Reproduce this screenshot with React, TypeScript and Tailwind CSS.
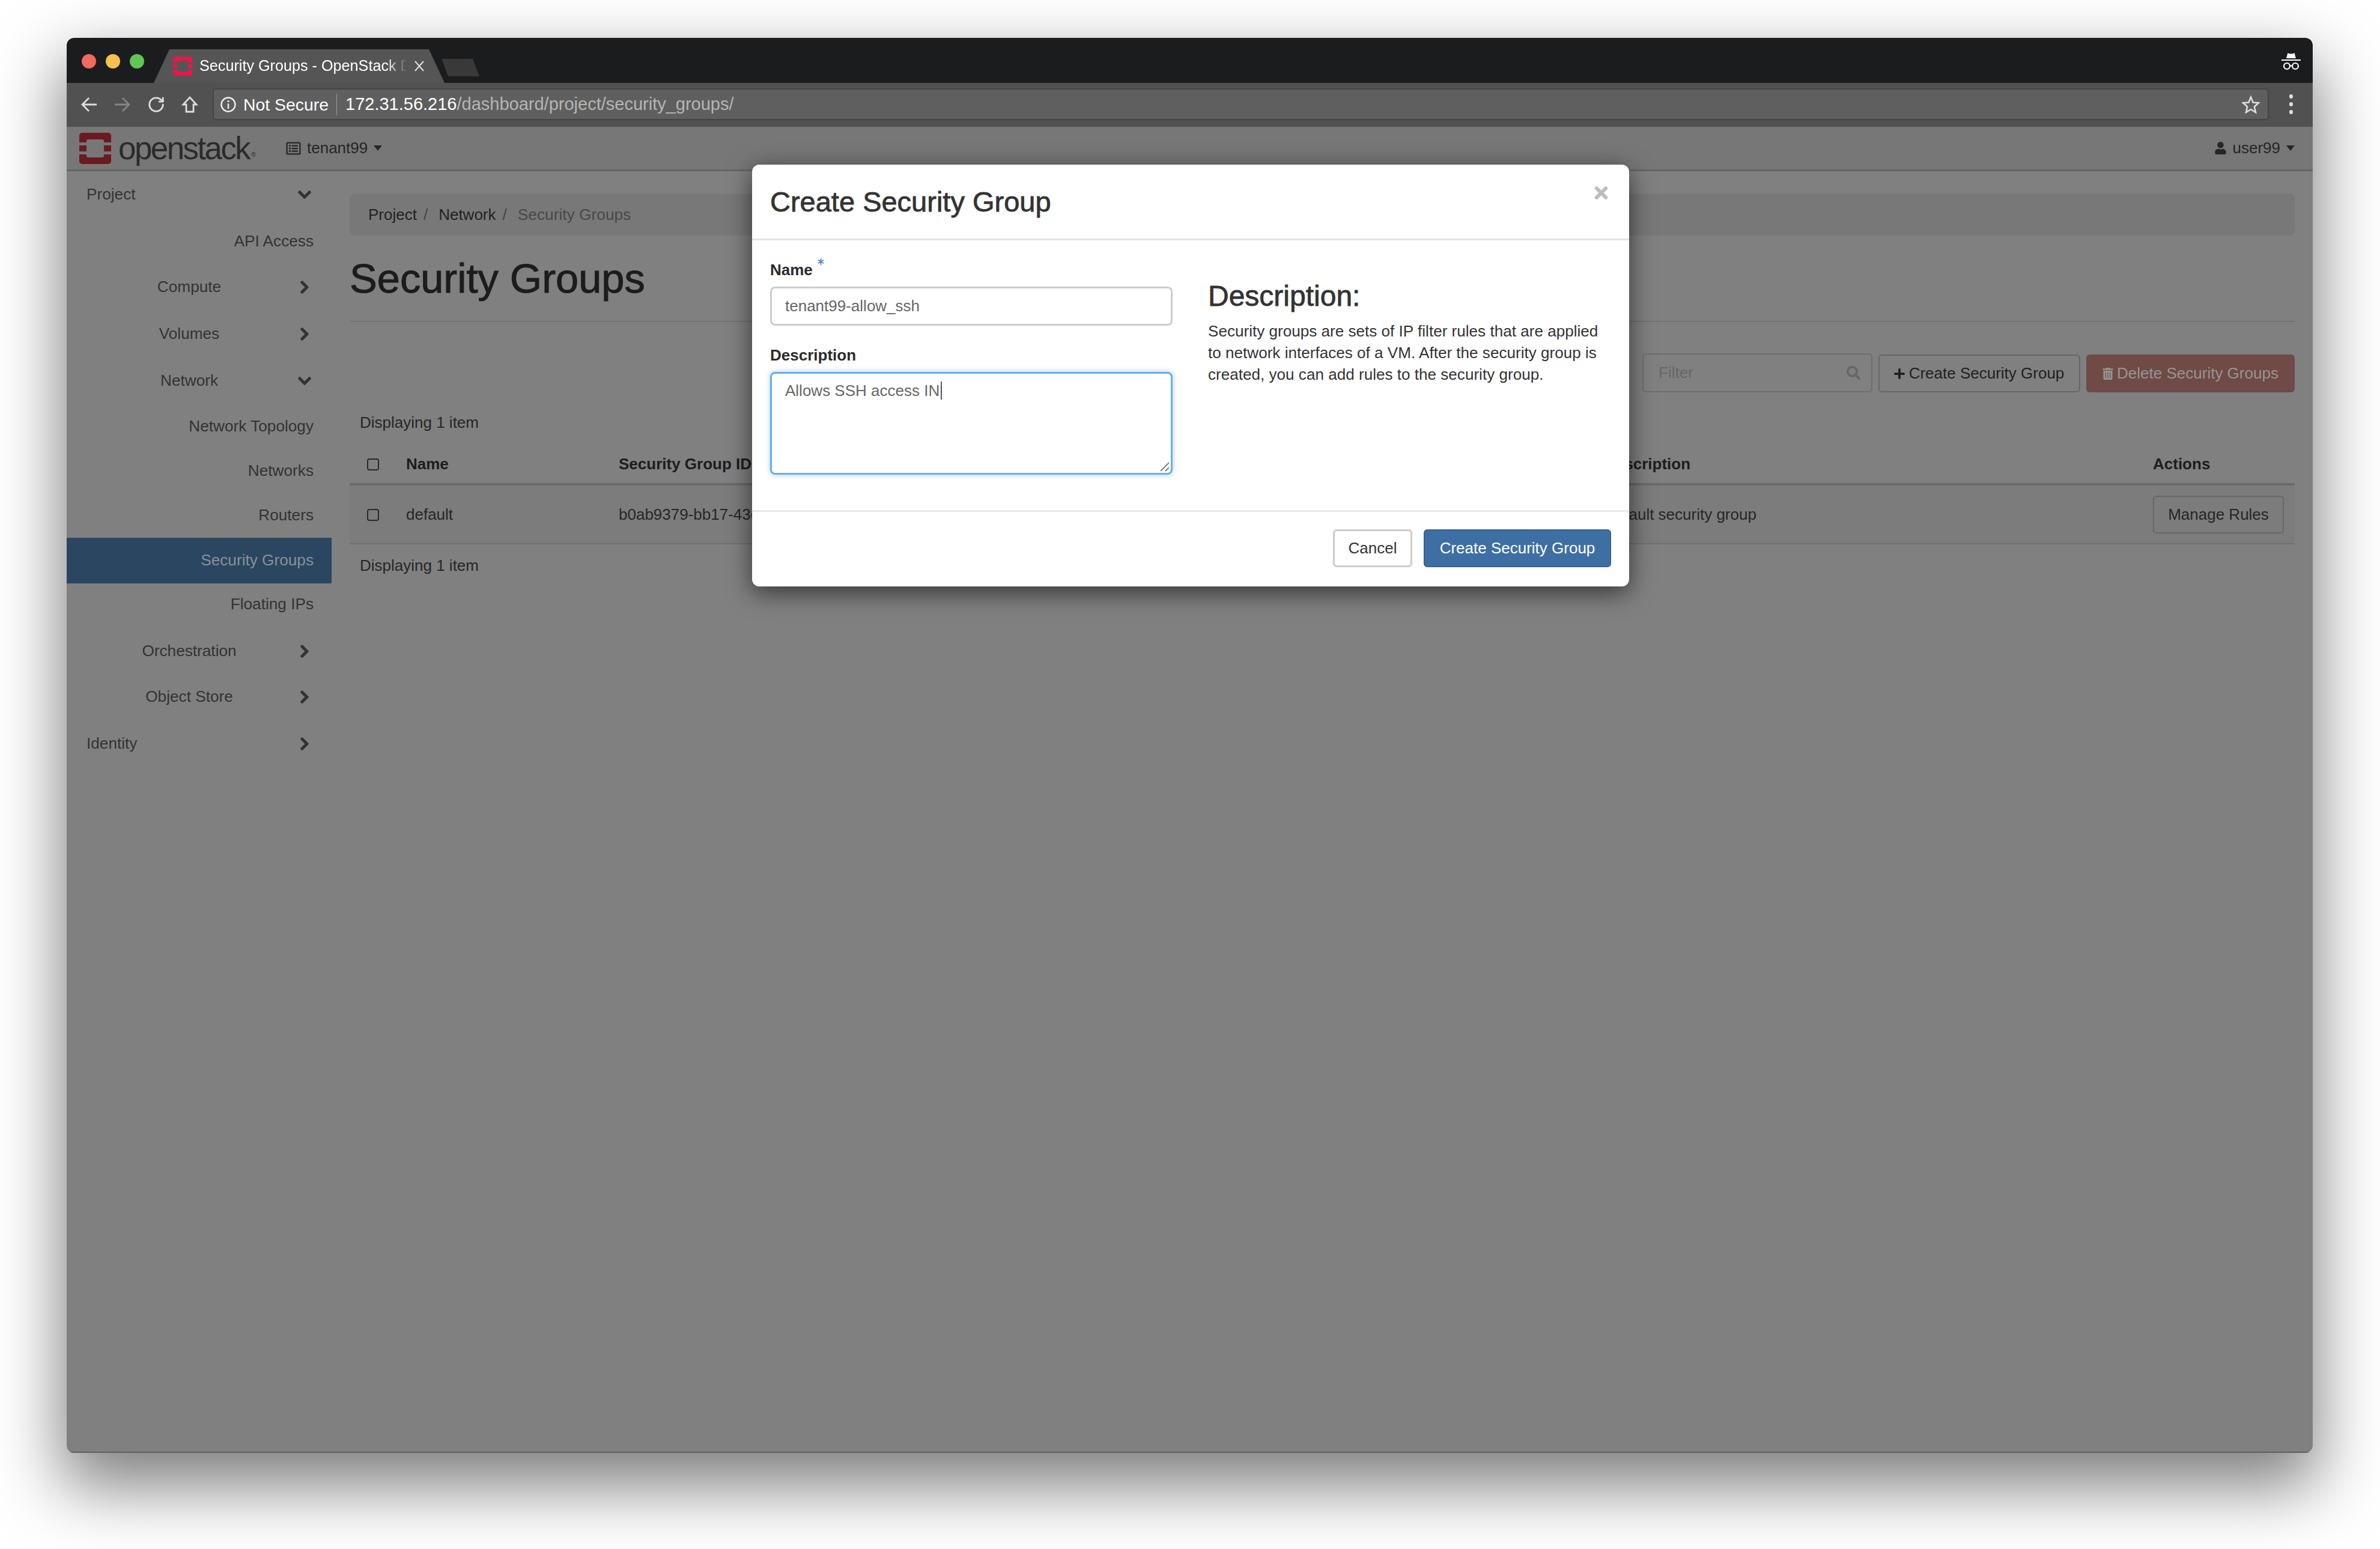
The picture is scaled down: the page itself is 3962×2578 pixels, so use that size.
import React from "react";
import { FaChevronDown, FaChevronRight, FaPlus, FaRegListAlt, FaSearch, FaTimes, FaTrashAlt, FaUser, FaAsterisk } from "react-icons/fa";
import { RotateCw } from "lucide-react";

type NavItem = { label: string; kind: "top" | "group" | "leaf"; open?: boolean; active?: boolean; mt: string };

const navItems: NavItem[] = [
  { label: "Project", kind: "top", open: true, mt: "mt-0" },
  { label: "API Access", kind: "leaf", mt: "mt-[4px]" },
  { label: "Compute", kind: "group", mt: "mt-[2px]" },
  { label: "Volumes", kind: "group", mt: "mt-[4px]" },
  { label: "Network", kind: "group", open: true, mt: "mt-[4px]" },
  { label: "Network Topology", kind: "leaf", mt: "mt-[2px]" },
  { label: "Networks", kind: "leaf", mt: "mt-0" },
  { label: "Routers", kind: "leaf", mt: "mt-0" },
  { label: "Security Groups", kind: "leaf", active: true, mt: "mt-0" },
  { label: "Floating IPs", kind: "leaf", mt: "mt-[-2px]" },
  { label: "Orchestration", kind: "group", mt: "mt-[4px]" },
  { label: "Object Store", kind: "group", mt: "mt-[2px]" },
  { label: "Identity", kind: "top", mt: "mt-[4px]" },
];

function StackLogo({ className }: { className: string }) {
  return (
    <svg viewBox="0 0 53 52" fill="currentColor" className={className}>
      <path d="M5 0H48a5 5 0 0 1 5 5V16H41V14a3 3 0 0 0-3-3H15a3 3 0 0 0-3 3V16H0V5a5 5 0 0 1 5-5z" />
      <path d="M0 36H12V38a3 3 0 0 0 3 3H38a3 3 0 0 0 3-3V36H53V47a5 5 0 0 1-5 5H5a5 5 0 0 1-5-5z" />
      <rect x="0" y="21" width="12" height="10" />
      <rect x="41" y="21" width="12" height="10" />
    </svg>
  );
}

function SideRow({ item }: { item: NavItem }) {
  if (item.kind === "leaf") {
    return (
      <div
        className={`${item.mt} flex items-center justify-end pr-[30px] text-[26.2px] ${
          item.active ? "h-[76px] bg-[#2a4661] text-[#8b9096]" : "h-[74px] text-[#333333]"
        }`}
      >
        {item.label}
      </div>
    );
  }
  return (
    <div className={`${item.mt} flex h-[74px] items-center text-[26.2px] text-[#333333] ${item.kind === "top" ? "pl-[33px]" : "pl-[24px]"}`}>
      <span className={item.kind === "top" ? "w-[351px]" : "w-[360px] text-center"}>{item.label}</span>
      <span className="flex w-[24px] justify-center">
        {item.open ? (
          <FaChevronDown className="h-[24px] w-[24px]" stroke="currentColor" strokeWidth={24} />
        ) : (
          <FaChevronRight className="h-[24px] w-[24px]" stroke="currentColor" strokeWidth={24} />
        )}
      </span>
    </div>
  );
}

function TabBar() {
  return (
    <div className="flex h-[75px] items-end rounded-t-[12px] bg-[#1b1c1e] pl-[25px]">
      <div className="mb-[24px] flex gap-[16px] self-end">
        <span className="h-[24px] w-[24px] rounded-full bg-[#f2695d]" />
        <span className="h-[24px] w-[24px] rounded-full bg-[#f6bf4f]" />
        <span className="h-[24px] w-[24px] rounded-full bg-[#62c554]" />
      </div>
      <div className="ml-[16px] flex h-[56px] w-[484px] items-center bg-[#555555] pl-[32px] [clip-path:polygon(0_100%,26px_0,458px_0,100%_100%)]">
        <StackLogo className="h-[32px] w-[32px] text-[#e8174a]" />
        <span className="ml-[12px] w-[346px] overflow-hidden whitespace-nowrap text-[25.2px] text-white [mask-image:linear-gradient(to_right,black_90%,transparent)]">
          Security Groups - OpenStack Dashboard
        </span>
        <svg viewBox="0 0 16 18" fill="none" stroke="#e0e0e0" strokeWidth="2" className="ml-[12px] h-[18px] w-[16px]">
          <path d="M1 1 15 17M15 1 1 17" />
        </svg>
      </div>
      <div className="mb-[11px] ml-[-5px] h-[29px] w-[63px] bg-[#39393a] [clip-path:polygon(0_0,52px_0,100%_100%,11px_100%)]" />
      <svg viewBox="0 0 32 30" className="mb-[21px] ml-auto mr-[20px] h-[30px] w-[32px] text-white" fill="currentColor">
        <path d="M8 10 10.5 1 13 2.5H19L21.5 1 24 10Z" />
        <rect x="0" y="12" width="32" height="2" />
        <circle cx="9" cy="23" r="5" fill="none" stroke="currentColor" strokeWidth="2.2" />
        <circle cx="23" cy="23" r="5" fill="none" stroke="currentColor" strokeWidth="2.2" />
        <path d="M14 22.5h4" stroke="currentColor" strokeWidth="2" />
      </svg>
    </div>
  );
}

function Toolbar() {
  return (
    <div className="flex h-[73px] items-center bg-[#515151] pb-[2px] pl-[22px]">
      <svg viewBox="0 0 30 30" fill="none" stroke="#dddddd" strokeWidth="2.8" className="h-[30px] w-[30px]">
        <path d="M28 15H4M15 4 4 15 15 26" />
      </svg>
      <svg viewBox="0 0 30 30" fill="none" stroke="#858585" strokeWidth="2.8" className="ml-[26px] h-[30px] w-[30px]">
        <path d="M2 15H26M15 4 26 15 15 26" />
      </svg>
      <RotateCw className="ml-[26px] h-[30px] w-[30px] text-[#dddddd]" strokeWidth={2.2} />
      <svg viewBox="0 0 30 30" fill="none" stroke="#dddddd" strokeWidth="2.8" className="ml-[26px] h-[30px] w-[30px]">
        <path d="M4 15 15 3 26 15H21V27H9V15Z" />
      </svg>
      <div className="ml-[23px] flex h-[53px] w-[3423px] items-center rounded-[6px] border-2 border-[#444444] bg-[#5f5f5f] pl-[11px] pr-[13px] text-[28px]">
        <svg viewBox="0 0 26 26" fill="none" stroke="#eeeeee" strokeWidth="2.4" className="h-[26px] w-[26px]">
          <circle cx="13" cy="13" r="11.5" />
          <path d="M13 11.5V20" />
          <circle cx="13" cy="7.5" r="1.6" fill="#eeeeee" stroke="none" />
        </svg>
        <span className="ml-[12px] pt-[1px] text-[28.4px] text-white">Not Secure</span>
        <span className="ml-[13px] h-[36px] w-[1px] bg-[#9a9a9a]" />
        <span className="ml-[14px] pt-[1px] text-[29px] text-white">172.31.56.216</span>
        <span className="pt-[1px] text-[29px] text-[#b5b5b5]">/dashboard/project/security_groups/</span>
        <svg viewBox="0 0 30 30" fill="none" stroke="#dddddd" strokeWidth="2.6" className="ml-auto h-[30px] w-[30px]">
          <path d="M15 2.5 18.6 11.5 28 12.2 20.8 18.5 23 28 15 23 7 28 9.2 18.5 2 12.2 11.4 11.5Z" />
        </svg>
      </div>
      <div className="ml-[34px] flex flex-col gap-[6px]">
        <span className="h-[7px] w-[6px] rounded-full bg-[#dddddd]" />
        <span className="h-[7px] w-[6px] rounded-full bg-[#dddddd]" />
        <span className="h-[7px] w-[6px] rounded-full bg-[#dddddd]" />
      </div>
    </div>
  );
}

function TopNav() {
  return (
    <div className="flex h-[74px] items-center border-b-[3px] border-[#666666] bg-[#777777] pl-[21px] text-[26px] text-[#262626]">
      <StackLogo className="h-[52px] w-[53px] text-[#6b1a1f]" />
      <span className="ml-[12px] flex w-[279px] items-end whitespace-nowrap text-[53px] leading-none tracking-[-2.6px] text-[#2b2b2b]">
        openstack
        <span className="mb-[10px] ml-[3px] text-[10px] leading-none tracking-normal">®</span>
      </span>
      <FaRegListAlt className="h-[24px] w-[25px]" />
      <span className="ml-[10px]">tenant99</span>
      <span className="ml-[10px] border-x-[7px] border-t-[9px] border-x-transparent border-t-[#262626]" />
      <div className="ml-auto mr-[30px] flex items-center">
        <FaUser className="h-[21px] w-[21px]" />
        <span className="ml-[10px]">user99</span>
        <span className="ml-[10px] border-x-[7px] border-t-[9px] border-x-transparent border-t-[#262626]" />
      </div>
    </div>
  );
}

function Checkbox() {
  return <span className="block h-[20px] w-[20px] rounded-[4px] border-2 border-[#2a2a2a]" />;
}

function GroupsTable() {
  return (
    <div className="text-[26px] text-[#262626]">
      <div className="flex h-[71px] items-center border-b-[4px] border-[#6a6a6a] pt-[4px] font-bold text-[#1d1d1d]">
        <span className="flex w-[94px] pl-[29px]">
          <Checkbox />
        </span>
        <span className="w-[354px]">Name</span>
        <span className="w-[1641px]">Security Group ID</span>
        <span className="w-[913px]">Description</span>
        <span>Actions</span>
      </div>
      <div className="flex h-[98px] items-center border-b-2 border-[#6f6f6f] bg-[#7c7c7c] pt-[1px]">
        <span className="flex w-[94px] pl-[29px]">
          <Checkbox />
        </span>
        <span className="w-[354px]">default</span>
        <span className="w-[1641px]">b0ab9379-bb17-43c1-9f6d-2e1c7a4b8d10</span>
        <span className="w-[913px]">Default security group</span>
        <span className="flex h-[63px] w-[218px] items-center justify-center rounded-[6px] border-2 border-[#666666]">Manage Rules</span>
      </div>
    </div>
  );
}

function MainContent() {
  return (
    <main className="flex-1 pl-[30px] pr-[30px] pt-[37px]">
      <div className="flex h-[70px] items-center rounded-[8px] bg-[#787878] pl-[31px] pt-[1px] text-[26px] text-[#222222]">
        <span>Project</span>
        <span className="ml-[11px] text-[#444444]">/</span>
        <span className="ml-[18px]">Network</span>
        <span className="ml-[11px] text-[#444444]">/</span>
        <span className="ml-[18px] text-[26.3px] text-[#484848]">Security Groups</span>
      </div>
      <div className="flex h-[144px] items-center border-b-2 border-[#737373] pt-[2px]">
        <h1 className="text-[68.6px] leading-none text-[#1c1c1c] [-webkit-text-stroke:1px_#1c1c1c]">Security Groups</h1>
      </div>
      <div className="mt-[52px] flex justify-end gap-[10px] text-[26px]">
        <div className="flex h-[65px] w-[383px] items-center justify-between rounded-[6px] border-2 border-[#6e6e6e] pl-[25px] pr-[18px] text-[#666666]">
          <span>Filter</span>
          <FaSearch className="h-[23px] w-[23px] text-[#666666]" />
        </div>
        <div className="mt-[2px] flex h-[63px] w-[336px] items-center justify-center gap-[6px] rounded-[6px] border-2 border-[#666666] pr-[2px] text-[#1f1f1f]">
          <FaPlus className="h-[20px] w-[20px]" />
          Create Security Group
        </div>
        <div className="mt-[2px] flex h-[63px] w-[347px] items-center justify-center gap-[6px] rounded-[6px] bg-[#6f4a46] text-[#999491]">
          <FaTrashAlt className="h-[20px] w-[18px]" />
          Delete Security Groups
        </div>
      </div>
      <p className="mt-[32px] h-[36px] pl-[17px] text-[26px] leading-[36px] text-[#262626]">Displaying 1 item</p>
      <div className="mt-[16px]">
        <GroupsTable />
      </div>
      <p className="mt-[17px] h-[36px] pl-[17px] text-[26px] leading-[36px] text-[#262626]">Displaying 1 item</p>
    </main>
  );
}

function CreateModal() {
  return (
    <div className="absolute left-[1141px] top-[63px] flex h-[702px] w-[1460px] flex-col rounded-[12px] bg-white text-[#333333] shadow-[0_10px_40px_rgba(0,0,0,0.6)]">
      <div className="flex h-[126px] shrink-0 items-center justify-between border-b-[3px] border-[#e5e5e5] pl-[30px] pr-[32px]">
        <h2 className="text-[47px] leading-none [-webkit-text-stroke:0.8px_#333333]">Create Security Group</h2>
        <FaTimes className="mb-[30px] h-[32px] w-[29px] text-[#bdbdbd]" />
      </div>
      <div className="flex h-[452px] shrink-0 border-b-[3px] border-[#e8e8e8] pl-[30px]">
        <div className="w-[670px] pt-[31px]">
          <div className="flex h-[36px] items-start text-[26px] font-bold leading-[36px] text-[#2b2b2b]">
            Name
            <FaAsterisk className="ml-[8px] mt-[-1px] h-[11px] w-[11px] text-[#4a8bc9]" />
          </div>
          <div className="mt-[10px] flex h-[65px] items-center rounded-[8px] border-[3px] border-[#cccccc] pl-[22px] text-[26px] text-[#666666]">
            tenant99-allow_ssh
          </div>
          <div className="mt-[31px] h-[36px] text-[26px] font-bold leading-[36px] text-[#2b2b2b]">Description</div>
          <div className="relative mt-[10px] h-[171px] rounded-[8px] border-[3px] border-[#66afe9] pl-[22px] pt-[7px] text-[26px] leading-[36px] text-[#666666] shadow-[0_0_10px_rgba(102,175,233,0.6)]">
            Allows SSH access IN
            <span className="ml-[2px] inline-block h-[30px] w-[2px] translate-y-[6px] bg-[#555555]" />
            <svg viewBox="0 0 16 16" stroke="#555555" strokeWidth="1.5" className="absolute bottom-[2px] right-[2px] h-[16px] w-[16px]">
              <path d="M1 15 15 1M9 15 15 9" />
            </svg>
          </div>
        </div>
        <div className="ml-[59px] pt-[65px]">
          <h3 className="text-[48px] leading-[56px] [-webkit-text-stroke:0.8px_#333333]">Description:</h3>
          <p className="mt-[12px] whitespace-nowrap text-[26.1px] leading-[36px]">
            Security groups are sets of IP filter rules that are applied
            <br />
            to network interfaces of a VM. After the security group is
            <br />
            created, you can add rules to the security group.
          </p>
        </div>
      </div>
      <div className="flex justify-end gap-[19px] pr-[30px] pt-[29px] text-[26px]">
        <div className="flex h-[63px] w-[132px] items-center justify-center rounded-[6px] border-[3px] border-[#cccccc]">Cancel</div>
        <div className="flex h-[63px] w-[312px] items-center justify-center rounded-[6px] border-2 border-[#36608f] bg-[#3e6fa4] text-white">
          Create Security Group
        </div>
      </div>
    </div>
  );
}

export default function App() {
  return (
    <div className="h-[2578px] w-[3962px] overflow-hidden bg-white pl-[111px] pt-[63px] font-['Liberation_Sans',Arial,sans-serif]">
      <div className="flex h-[2355px] w-[3739px] flex-col overflow-hidden rounded-[12px] shadow-[0_48px_110px_8px_rgba(0,0,0,0.5)]">
        <TabBar />
        <Toolbar />
        <div className="relative flex flex-1 flex-col border-b-2 border-[#5f5f5f] bg-[#808080]">
          <TopNav />
          <div className="flex flex-1">
            <aside className="w-[441px] pt-[2px]">
              {navItems.map((item) => (
                <SideRow key={item.label} item={item} />
              ))}
            </aside>
            <MainContent />
          </div>
          <CreateModal />
        </div>
      </div>
    </div>
  );
}
